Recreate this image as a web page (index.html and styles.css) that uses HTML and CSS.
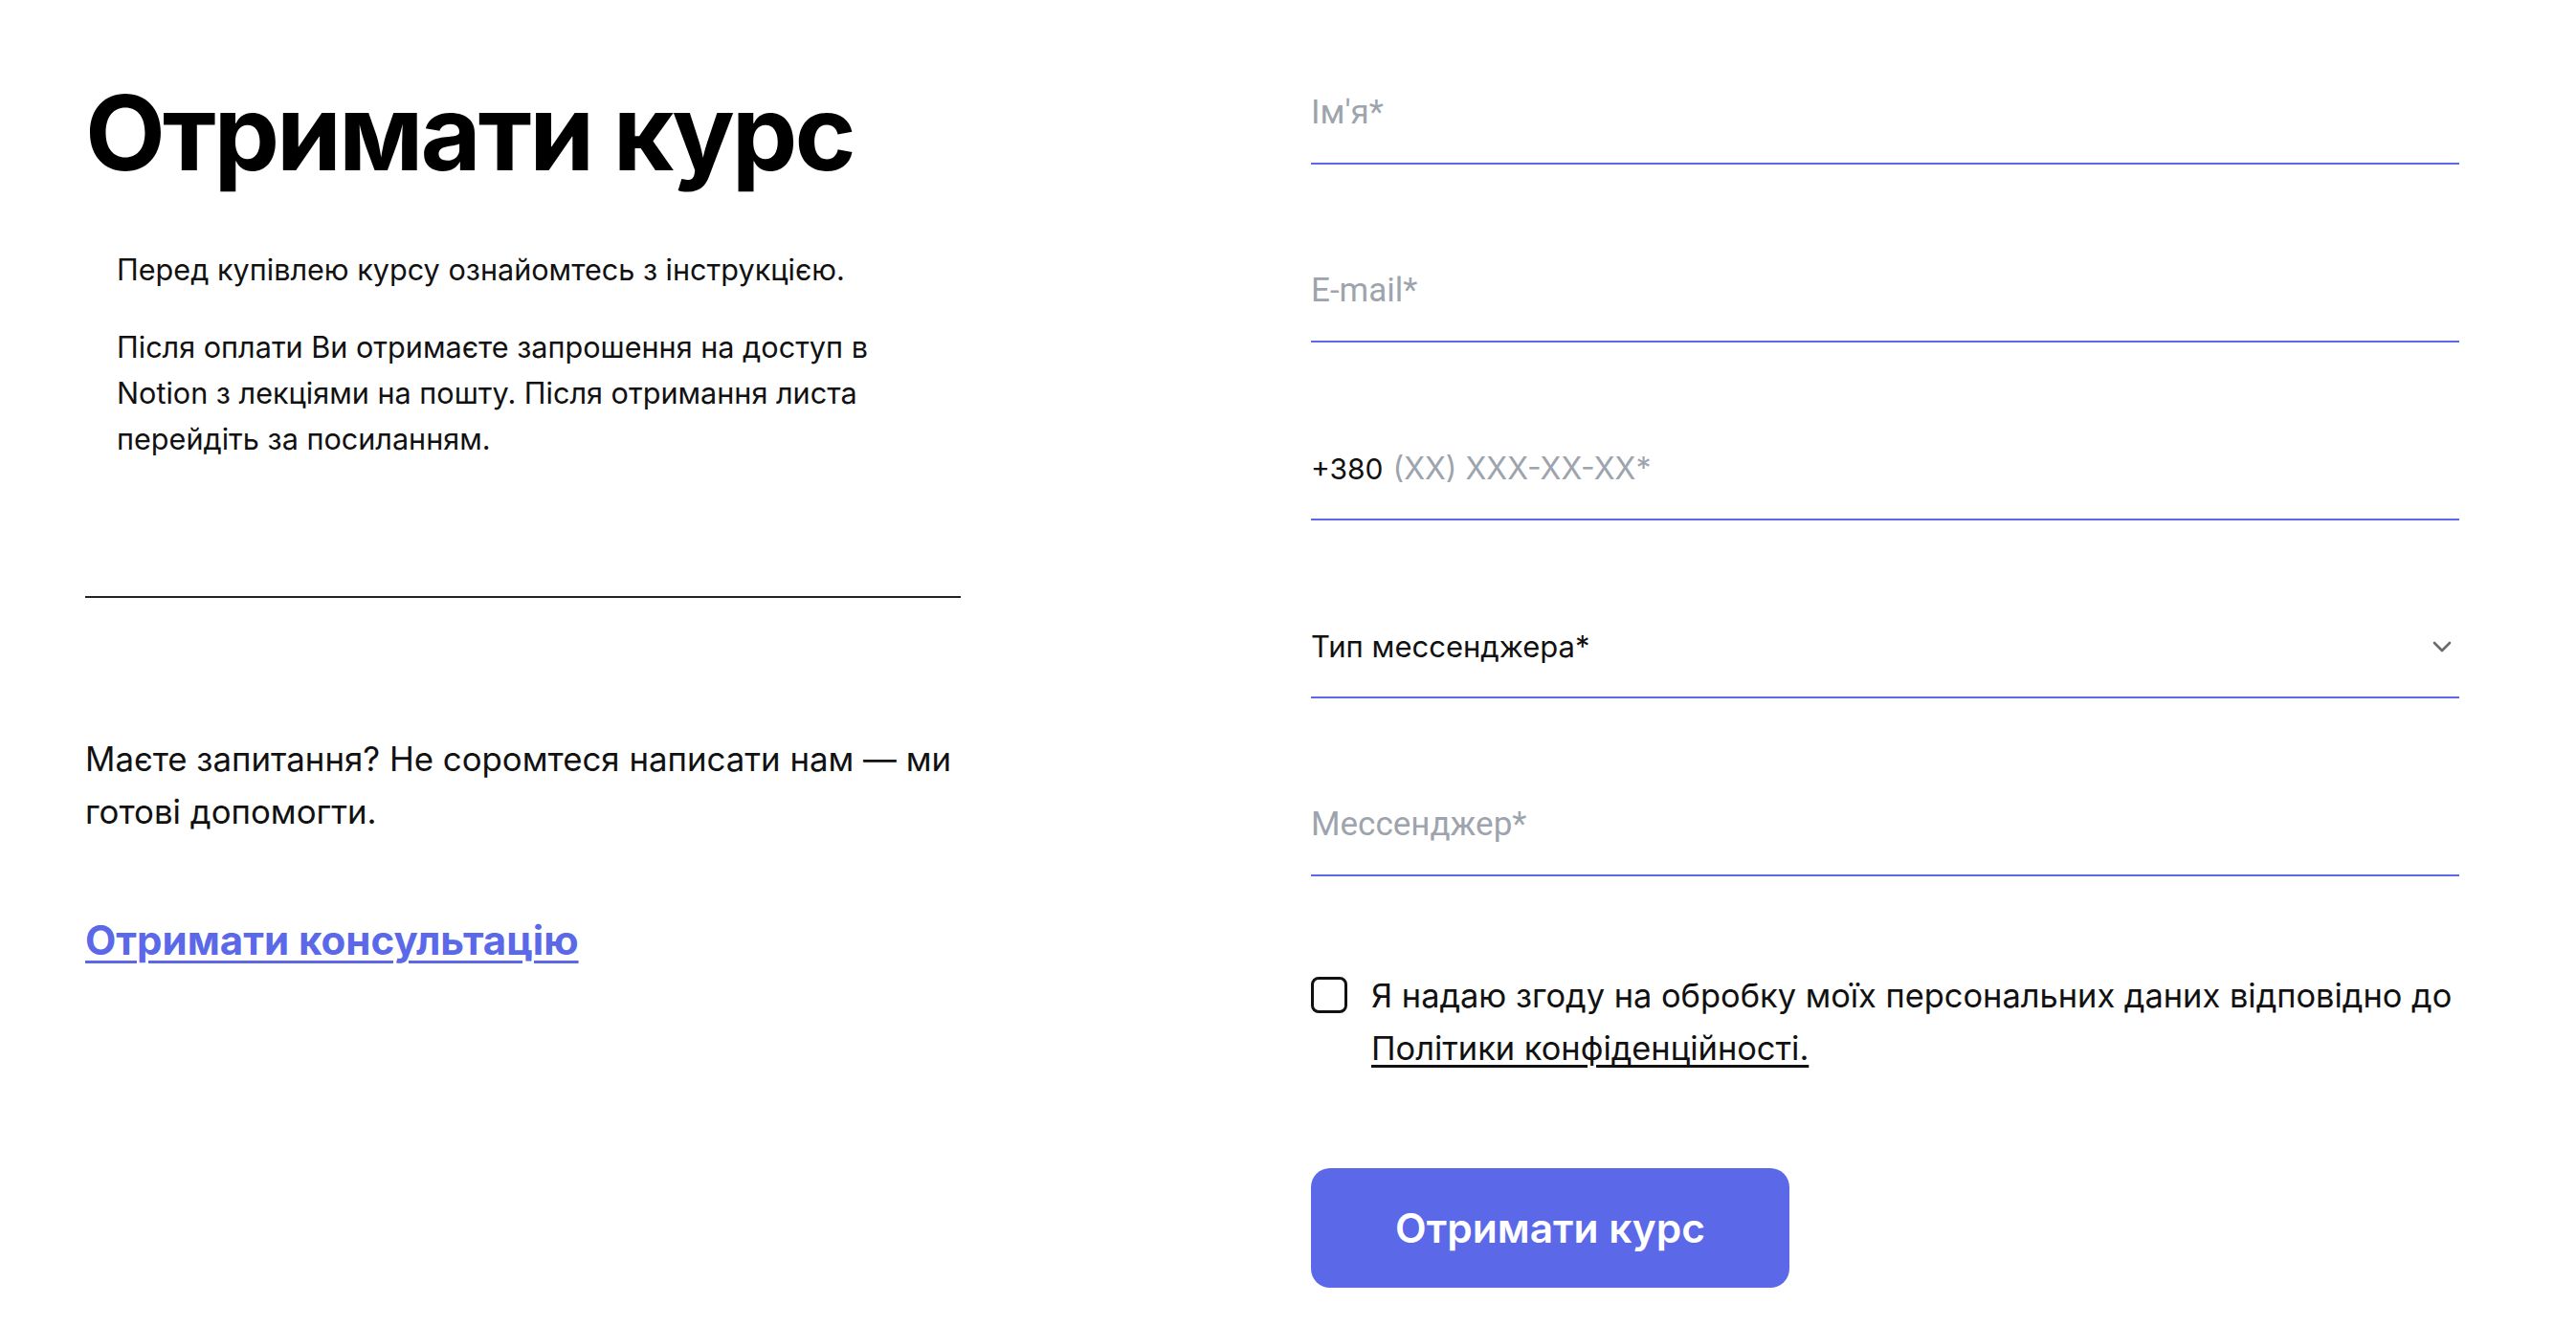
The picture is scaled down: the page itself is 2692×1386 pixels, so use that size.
FILE: index.html
```html
<!DOCTYPE html>
<html lang="uk">
<head>
<meta charset="utf-8">
<title>Отримати курс</title>
<link rel="stylesheet" href="styles.css">
</head>
<body>
<main class="page">
  <section class="info">
    <h1 class="title">Отримати курс</h1>
    <div class="notes">
      <p class="note">Перед купівлею курсу ознайомтесь з інструкцією.</p>
      <p class="note">Після оплати Ви отримаєте запрошення на доступ в Notion з лекціями на пошту. Після отримання листа перейдіть за посиланням.</p>
    </div>
    <hr class="divider">
    <p class="question">Маєте запитання? Не соромтеся написати нам — ми готові допомогти.</p>
    <a class="consult" href="#">Отримати консультацію</a>
  </section>
  <form class="form">
    <div class="field"><span class="ph ph-sys">Ім'я*</span></div>
    <div class="field"><span class="ph ph-sys">E-mail*</span></div>
    <div class="field"><span class="prefix">+380</span><span class="ph">(XX) XXX-XX-XX*</span></div>
    <div class="field field-select"><span class="value">Тип мессенджера*</span>
      <svg class="chev" width="20" height="12" viewBox="0 0 20 12"><path d="M2 2 L10 10 L18 2" fill="none" stroke="#6b6b6b" stroke-width="2.6" stroke-linecap="round" stroke-linejoin="round"/></svg>
    </div>
    <div class="field"><span class="ph ph-sys">Мессенджер*</span></div>
    <div class="consent">
      <span class="box"></span>
      <p class="consent-text">Я надаю згоду на обробку моїх персональних даних відповідно до <a class="policy" href="#">Політики конфіденційності.</a></p>
    </div>
    <button class="submit" type="button">Отримати курс</button>
  </form>
</main>
</body>
</html>
```
FILE: styles.css
```css
* { box-sizing: border-box; }
html, body { margin: 0; padding: 0; background: #fff; }
body { font-family: Inter, "Noto Sans", sans-serif; color: #111; }

.page {
  display: flex;
  justify-content: space-between;
  padding: 0 122px 0 89px;
}

.info {
  width: 915px;
  display: flex;
  flex-direction: column;
  padding-top: 72px;
}

.title {
  margin: 0;
  font-size: 109px;
  line-height: 132px;
  font-weight: 700;
  letter-spacing: -3px;
  color: #000;
}

.notes { padding-left: 33px; margin-top: 54px; }
.note {
  margin: 0;
  font-size: 30.6px;
  line-height: 48px;
  width: 850px;
}
.note + .note { margin-top: 33px; }

.divider {
  border: 0;
  border-top: 2px solid #222;
  margin: 140px 0 0;
  width: 915px;
}

.question {
  margin: 141px 0 0;
  font-size: 34.8px;
  line-height: 55px;
  width: 950px;
}

.consult {
  margin-top: 79px;
  font-size: 42px;
  line-height: 55px;
  font-weight: 700;
  color: #5b68e8;
  text-decoration: underline;
  text-decoration-thickness: 3px;
  text-underline-offset: 6px;
  align-self: flex-start;
}

.form {
  width: 1200px;
  display: flex;
  flex-direction: column;
  padding-top: 98px;
}

.field {
  display: flex;
  align-items: center;
  height: 74px;
  padding-bottom: 32px;
  border-bottom: 2px solid #5b68e8;
  font-size: 31px;
  line-height: 40px;
}
.field + .field { margin-top: 112px; }

.ph { color: #9ea4ae; font-size: 32px; }
.ph-sys { font-family: Roboto, "Noto Sans", sans-serif; font-size: 35px; }
.prefix { color: #111; margin-right: 10px; font-size: 30px; }
.value { color: #111; }
.field-select { justify-content: space-between; padding-right: 8px; }
.chev { display: block; }

.consent {
  display: flex;
  align-items: flex-start;
  gap: 25px;
  margin-top: 97px;
}
.box {
  flex: none;
  width: 38px;
  height: 38px;
  margin-top: 8px;
  border: 3px solid #111;
  border-radius: 8px;
}
.consent-text {
  margin: 0;
  font-size: 34.4px;
  line-height: 55px;
}
.policy { color: #111; text-decoration: underline; text-underline-offset: 5px; }

.submit {
  margin-top: 98px;
  width: 500px;
  height: 125px;
  border: 0;
  border-radius: 20px;
  background: #5b68e8;
  color: #fff;
  font-family: Inter, "Noto Sans", sans-serif;
  font-size: 42.5px;
  font-weight: 600;
  align-self: flex-start;
}
```
